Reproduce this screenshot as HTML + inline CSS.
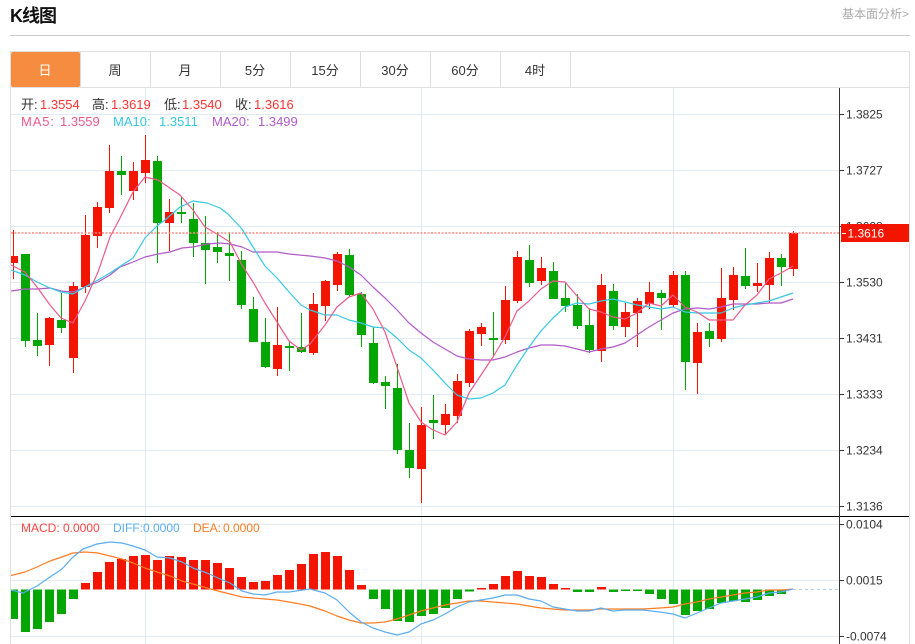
<!DOCTYPE html>
<html lang="zh"><head><meta charset="utf-8"><title>K线图</title>
<style>
html,body{margin:0;padding:0;background:#fff;width:915px;height:644px;overflow:hidden}
svg{display:block}
text{font-family:"Liberation Sans","Noto Sans CJK SC",sans-serif;font-size:13px}
.ax{font-size:12px;fill:#333}
.tab{fill:#333;text-anchor:middle}
.r{fill:#f33}
.k{fill:#333}
.m5{fill:#ec5a8c}.m10{fill:#37c8e2}.m20{fill:#b25ac8}
.mc{font-size:12px}
.w{fill:none;stroke-width:1}
.l{fill:none;stroke-width:1.2;stroke-linejoin:round}
</style></head><body>
<svg width="915" height="644" viewBox="0 0 915 644" xmlns="http://www.w3.org/2000/svg">
<defs><clipPath id="c"><rect x="11" y="88" width="828" height="556"/></clipPath></defs>

<text x="10" y="22" style="font-size:18px;font-weight:bold" fill="#111" textLength="47" lengthAdjust="spacing">K线图</text>
<text x="909" y="18" text-anchor="end" style="font-size:12px" fill="#aaa">基本面分析&gt;</text>
<path d="M10 35.5H910" stroke="#ccc" fill="none"/>

<!-- frame and tabs -->
<path d="M10.5 644V51.5H909.5V644M11 87.5H909" stroke="#e0e0e0" fill="none"/>
<path d="M80.5 52V87M150.5 52V87M220.5 52V87M290.5 52V87M360.5 52V87M430.5 52V87M500.5 52V87M570.5 52V87" stroke="#ddd" fill="none"/>
<rect x="11" y="52" width="69" height="35" rx="2" fill="#f58c3f"/>
<text x="45" y="75" text-anchor="middle" fill="#fff">日</text>
<text x="115" y="75" class="tab">周</text>
<text x="185" y="75" class="tab">月</text>
<text x="255" y="75" class="tab">5分</text>
<text x="325" y="75" class="tab">15分</text>
<text x="395" y="75" class="tab">30分</text>
<text x="465" y="75" class="tab">60分</text>
<text x="535" y="75" class="tab">4时</text>

<!-- grid -->
<path d="M11 114.5H839M11 170.5H839M11 226.5H839M11 282.5H839M11 338.5H839M11 394.5H839M11 450.5H839M11 506.5H839M11 524.5H839M11 580.5H839M11 636.5H839M145.5 88V644M421.5 88V644M673.5 88V644" stroke="#e1ebf3" fill="none"/>

<g clip-path="url(#c)">
<!-- red wicks -->
<path class="w" stroke="#f21500" d="M13.5 230V279M49.5 317V366M73.5 282V373M85.5 215V293M97.5 202V248M109.5 145V213M133.5 162V200M145.5 135V183M169.5 199V251M277.5 307V376M313.5 293V355M325.5 280V321M337.5 252V291M421.5 407V503M445.5 404V435M457.5 374V423M469.5 329V387M481.5 323V346M505.5 286V344M517.5 251V303M541.5 257V285M601.5 274V362M625.5 303V337M637.5 298V347M649.5 282V309M673.5 271V307M697.5 323V394M721.5 268V342M733.5 267V310M757.5 263V292M769.5 252V303M793.5 231V276"/>
<!-- red bodies -->
<path fill="#f31500" d="M9 256h9v7h-9zM45 318h9v27h-9zM69 286h9v72h-9zM81 235h9v52h-9zM93 207h9v29h-9zM105 171h9v37h-9zM129 171h9v20h-9zM141 160h9v13h-9zM165 212h9v11h-9zM273 345h9v24h-9zM309 304h9v49h-9zM321 281h9v25h-9zM333 254h9v31h-9zM417 425h9v44h-9zM441 414h9v11h-9zM453 381h9v35h-9zM465 331h9v52h-9zM477 327h9v7h-9zM501 300h9v40h-9zM513 257h9v44h-9zM537 268h9v13h-9zM597 285h9v66h-9zM621 312h9v15h-9zM633 301h9v12h-9zM645 292h9v12h-9zM669 275h9v30h-9zM693 332h9v31h-9zM717 298h9v41h-9zM729 275h9v25h-9zM753 283h9v3h-9zM765 258h9v27h-9zM789 233h9v36h-9z"/>
<!-- green wicks -->
<path class="w" stroke="#03a603" d="M25.5 254V347M37.5 313V356M61.5 293V333M121.5 156V195M157.5 156V263M181.5 197V223M193.5 203V257M205.5 216V284M217.5 232V263M229.5 232V281M241.5 251V309M253.5 297V342M265.5 318V368M289.5 342V371M301.5 313V353M349.5 249V297M361.5 292V347M373.5 327V384M385.5 376V409M397.5 364V454M409.5 423V478M433.5 395V439M493.5 312V357M529.5 245V287M553.5 262V299M565.5 282V312M577.5 294V329M589.5 308V353M613.5 284V330M661.5 290V330M685.5 271V390M709.5 323V347M745.5 248V289M781.5 254V286"/>
<!-- green bodies -->
<path fill="#03a603" d="M21 254h9v87h-9zM33 340h9v6h-9zM57 320h9v8h-9zM117 171h9v4h-9zM153 161h9v62h-9zM177 212h9v2h-9zM189 219h9v24h-9zM201 243h9v7h-9zM213 247h9v5h-9zM225 253h9v3h-9zM237 260h9v45h-9zM249 309h9v33h-9zM261 342h9v25h-9zM285 346h9v2h-9zM297 347h9v5h-9zM345 255h9v40h-9zM357 294h9v41h-9zM369 343h9v40h-9zM381 382h9v4h-9zM393 388h9v62h-9zM405 450h9v18h-9zM429 420h9v3h-9zM489 338h9v2h-9zM525 260h9v23h-9zM549 271h9v28h-9zM561 298h9v8h-9zM573 305h9v21h-9zM585 325h9v25h-9zM609 291h9v35h-9zM657 293h9v5h-9zM681 275h9v87h-9zM705 331h9v8h-9zM741 276h9v10h-9zM777 258h9v9h-9z"/>

<!-- MA lines -->
<polyline class="l" stroke="#b25ac8" points="11,291 25,289 37,289 50,288 61,291 73,292 85,287 98,282 110,275 120,267 133,262 145,257 158,254 170,252 182,248 193,247 207,244 220,243 230,244 242,247 253,252 265,252 277,252 289,254 310,256 325,258 337,261 349,267 361,275 373,287 385,298 397,310 409,323 421,333 433,342 445,349 457,356 469,359 481,360 493,360 505,357 517,352 529,348 541,345 553,345 565,346 577,349 589,352 601,349 613,347 625,343 637,335 649,327 661,320 673,313 685,309 697,308 709,309 721,307 733,304 745,304 757,304 769,303 781,303 793,299"/>
<polyline class="l" stroke="#37c8e2" points="11,270 25,275 37,282 50,288 61,292 73,294 85,287 98,280 110,273 133,258 145,238 158,225 165,220 180,207 193,201 207,203 220,208 228,214 242,229 253,247 265,266 277,278 289,292 301,305 310,310 325,315 337,315 349,320 361,323 373,327 385,328 397,338 409,350 421,358 433,370 445,383 457,395 469,399 481,398 493,393 505,385 517,365 529,347 541,331 553,318 565,307 577,303 589,304 601,301 613,299 625,302 637,305 649,307 661,309 673,307 685,312 697,313 709,313 721,313 733,308 745,305 757,303 769,301 781,297 793,293"/>
<polyline class="l" stroke="#ec5a8c" points="11,265 25,272 37,287 50,305 61,318 73,323 85,301 98,272 110,237 119,220 133,192 145,177 158,180 180,195 193,210 205,227 217,234 230,242 242,265 253,282 265,303 277,322 289,341 301,350 310,344 325,325 337,307 349,297 361,293 373,309 385,332 397,367 409,403 421,422 433,430 445,435 457,422 469,393 481,375 493,357 505,337 517,311 529,301 541,289 553,281 565,282 577,296 589,309 601,312 613,317 625,319 637,313 649,303 661,306 673,295 685,307 697,312 709,320 721,320 733,320 745,305 757,295 769,279 781,273 793,266"/>

<!-- MACD bars -->
<path fill="#f31500" d="M81 583h9v6.5h-9zM93 572h9v17.5h-9zM105 562h9v27.5h-9zM117 559h9v30.5h-9zM129 556h9v33.5h-9zM141 555h9v34.5h-9zM153 560h9v29.5h-9zM165 556h9v33.5h-9zM177 557h9v32.5h-9zM189 560h9v29.5h-9zM201 560h9v29.5h-9zM213 563h9v26.5h-9zM225 568h9v21.5h-9zM237 577h9v12.5h-9zM249 582h9v7.5h-9zM261 581h9v8.5h-9zM273 575h9v14.5h-9zM285 570h9v19.5h-9zM297 564h9v25.5h-9zM309 554h9v35.5h-9zM321 552h9v37.5h-9zM333 556h9v33.5h-9zM345 570h9v19.5h-9zM357 585h9v4.5h-9zM477 588h9v1.5h-9zM489 584h9v5.5h-9zM501 576h9v13.5h-9zM513 571h9v18.5h-9zM525 576h9v13.5h-9zM537 577h9v12.5h-9zM549 584h9v5.5h-9zM561 588h9v1.5h-9zM597 587h9v2.5h-9z"/>
<path fill="#03a603" d="M9 589.5h9V619h-9zM21 589.5h9V632h-9zM33 589.5h9V629h-9zM45 589.5h9V622h-9zM57 589.5h9V614h-9zM69 589.5h9V599h-9zM369 589.5h9V599h-9zM381 589.5h9V609h-9zM393 589.5h9V621h-9zM405 589.5h9V622h-9zM417 589.5h9V616h-9zM429 589.5h9V614h-9zM441 589.5h9V608h-9zM453 589.5h9V599h-9zM465 589.5h9V591.5h-9zM573 589.5h9V592h-9zM585 589.5h9V592h-9zM609 589.5h9V592h-9zM621 589.5h9V591h-9zM633 589.5h9V591h-9zM645 589.5h9V594h-9zM657 589.5h9V599h-9zM669 589.5h9V604h-9zM681 589.5h9V615h-9zM693 589.5h9V611h-9zM705 589.5h9V609h-9zM717 589.5h9V603h-9zM729 589.5h9V601h-9zM741 589.5h9V602h-9zM753 589.5h9V600h-9zM765 589.5h9V596h-9zM777 589.5h9V594h-9z"/>
<path d="M793 589.5H839" stroke="#b5d5e8" stroke-dasharray="3 3" fill="none"/>
<polyline class="l" stroke="#ff7d22" points="11,575.5 25,572 37,567 50,561 62,557 73,553 85,552 98,553 110,556 122,559 133,563 145,568 157,572 170,576 182,581 193,584 207,588 218,591 230,594 242,597 253,598 265,599 277,600 289,602 300,604 310,606 325,611 337,616 349,620 361,623 373,623 385,622 397,619 409,615 421,611 433,608 445,605 457,603 469,601 481,601 493,602 505,603 517,604 529,606 541,608 553,609 565,610 577,610 589,610 601,609 620,609 643,609 660,608 673,607 685,604 697,602 709,599 721,597 733,595 745,593 757,592 769,590 781,590 793,589"/>
<polyline class="l" stroke="#5aaef2" points="11,590 23,593 37,586 50,577 62,569 72,558 83,549 97,544 110,542 122,543 133,546 145,550 157,557 170,558 182,562 193,568 207,573 218,578 230,583 242,591 253,594 265,595 277,592 289,592 310,589 325,593 337,600 349,612 361,622 373,628 385,632 397,635 409,632 421,624 433,620 445,614 457,607 469,602 481,600 493,598 505,595 517,595 529,599 541,601 553,607 565,609 577,611 589,611 601,608 613,611 625,610 643,610 660,612 673,614 685,618 697,613 709,608 721,603 733,601 745,599 757,597 769,593 781,592 793,589"/>
</g>

<!-- current price line -->
<path d="M11 233H839" stroke="#ff8a80" stroke-width="1.5" stroke-dasharray="2 1.5" fill="none"/>

<!-- axis -->
<path d="M11 516.5H909" stroke="#000" fill="none"/>
<path d="M839.5 88V644" stroke="#333" fill="none"/>
<path d="M840 114.5h4M840 170.5h4M840 226.5h4M840 282.5h4M840 338.5h4M840 394.5h4M840 450.5h4M840 506.5h4M840 524.5h4M840 580.5h4M840 636.5h4" stroke="#333" fill="none"/>
<text class="ax" x="846" y="118.5">1.3825</text>
<text class="ax" x="846" y="174.5">1.3727</text>
<text class="ax" x="846" y="230.5">1.3628</text>
<text class="ax" x="846" y="286.5">1.3530</text>
<text class="ax" x="846" y="342.5">1.3431</text>
<text class="ax" x="846" y="398.5">1.3333</text>
<text class="ax" x="846" y="454.5">1.3234</text>
<text class="ax" x="846" y="510.5">1.3136</text>
<text class="ax" x="846" y="528.5">0.0104</text>
<text class="ax" x="846" y="584.5">0.0015</text>
<text class="ax" x="846" y="640.5">-0.0074</text>
<rect x="841" y="224" width="68" height="18" fill="#f31500"/>
<path d="M842 233.5h4" stroke="#fff" fill="none"/>
<text x="847.5" y="237.5" fill="#fff" style="font-size:12px">1.3616</text>

<!-- info rows -->
<text x="21" y="109" class="k">开:</text><text x="40" y="109" class="r">1.3554</text>
<text x="92" y="109" class="k">高:</text><text x="111" y="109" class="r">1.3619</text>
<text x="164" y="109" class="k">低:</text><text x="182" y="109" class="r">1.3540</text>
<text x="235" y="109" class="k">收:</text><text x="254" y="109" class="r">1.3616</text>
<text x="21" y="126" class="m5" textLength="33">MA5:</text><text x="60" y="126" class="m5">1.3559</text>
<text x="113" y="126" class="m10">MA10:</text><text x="159" y="126" class="m10">1.3511</text>
<text x="212" y="126" class="m20">MA20:</text><text x="258" y="126" class="m20">1.3499</text>
<text x="21" y="532" class="mc" fill="#f44">MACD:</text><text x="63" y="532" class="mc" fill="#f44">0.0000</text>
<text x="113" y="532" class="mc" fill="#5aaef2">DIFF:</text><text x="143" y="532" class="mc" fill="#5aaef2">0.0000</text>
<text x="193" y="532" class="mc" fill="#ff7d22">DEA:</text><text x="223" y="532" class="mc" fill="#ff7d22">0.0000</text>
</svg>
</body></html>
